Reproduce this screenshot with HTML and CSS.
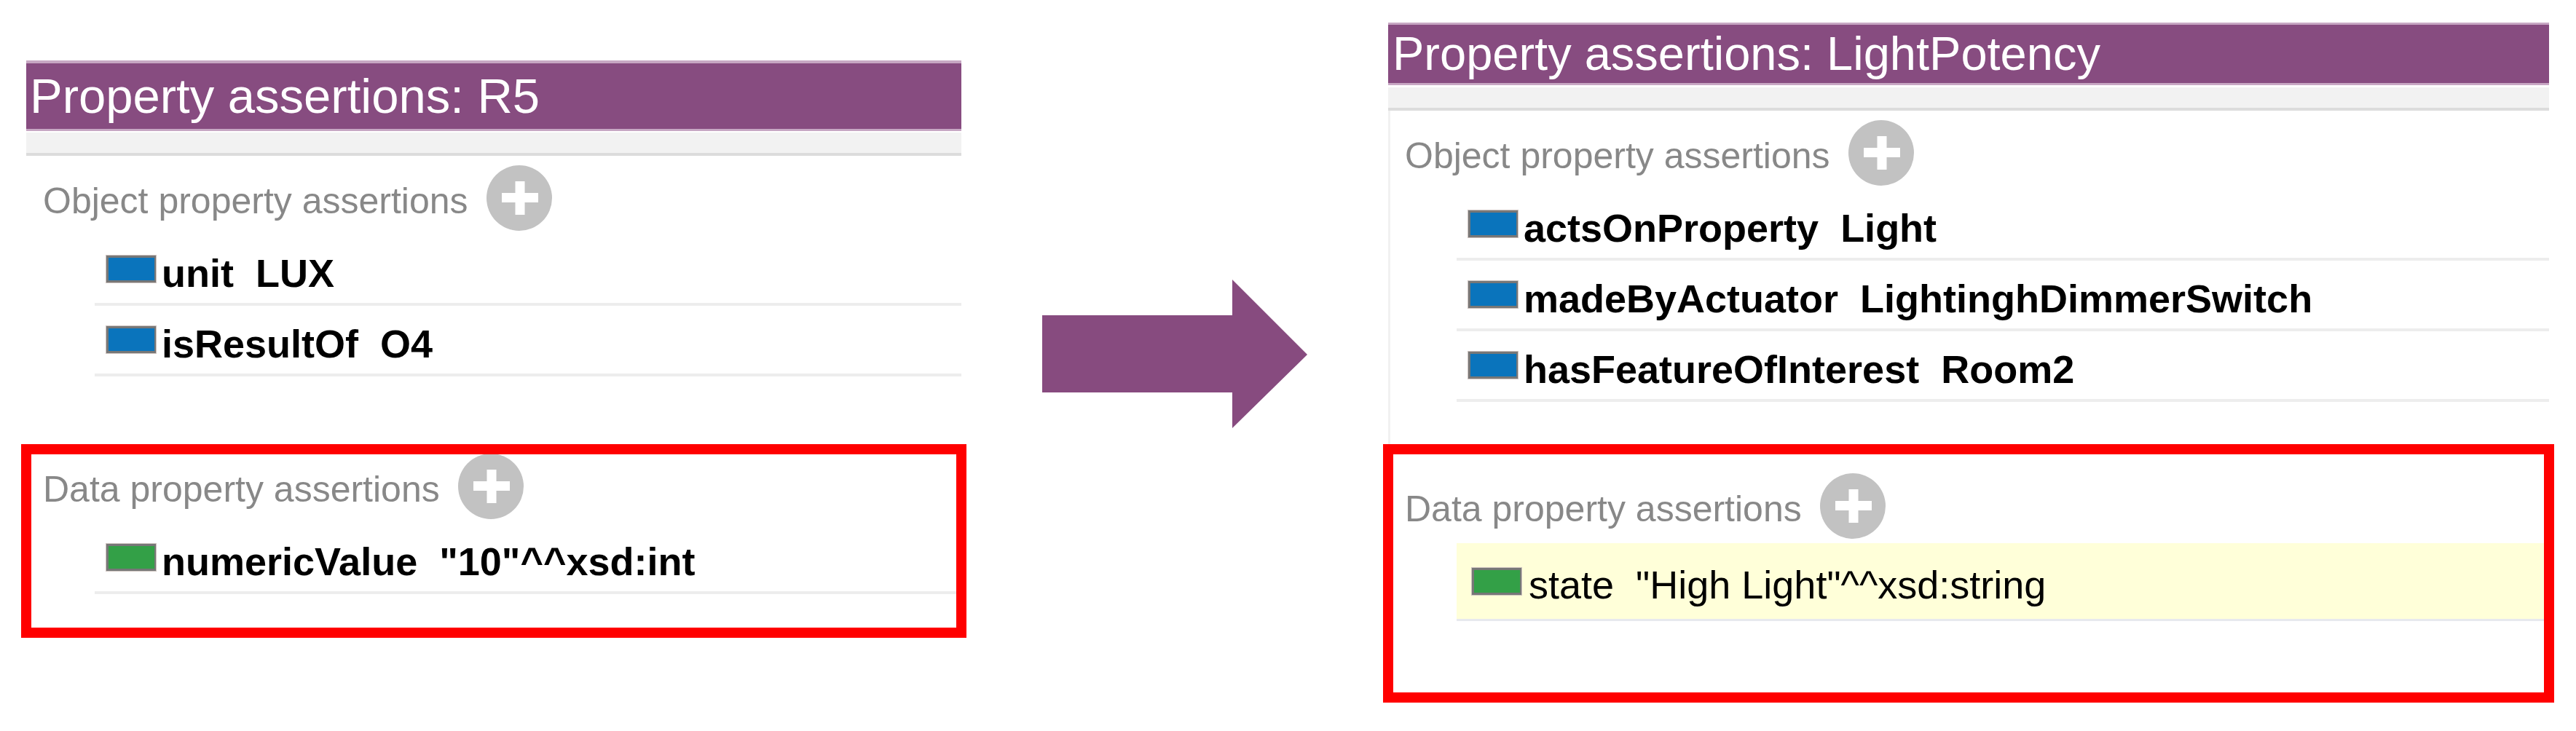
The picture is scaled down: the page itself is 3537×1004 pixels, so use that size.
FILE: index.html
```html
<!DOCTYPE html>
<html lang="en">
<head>
    <meta charset="UTF-8">
    <meta name="viewport" content="width=device-width, initial-scale=1.0">
    <title>Property assertions: R5 → LightPotency</title>
    <link rel="stylesheet" href="styles.css">
</head>
<body>
    <main class="compare">
        <section class="panel panel-r5">
            <div class="panel-title">Property assertions: R5</div>
            <div class="panel-toolbar"></div>
            <div class="panel-body">
                <div class="group group-objects">
                    <div class="group-head">
                        <span class="group-label">Object property assertions</span>
                        <svg class="add" viewBox="0 0 90 90"><circle cx="45" cy="45" r="45" fill="#c2c2c2"/><rect x="21" y="38" width="50" height="13" fill="#fff"/><rect x="39.5" y="22" width="13" height="46" fill="#fff"/></svg>
                    </div>
                    <ul class="assertions">
                        <li class="assertion"><span class="swatch swatch-object"></span><span class="assertion-text">unit  LUX</span></li>
                        <li class="assertion"><span class="swatch swatch-object"></span><span class="assertion-text">isResultOf  O4</span></li>
                    </ul>
                </div>
                <div class="group group-data highlight">
                    <div class="group-head">
                        <span class="group-label">Data property assertions</span>
                        <svg class="add" viewBox="0 0 90 90"><circle cx="45" cy="45" r="45" fill="#c2c2c2"/><rect x="21" y="38" width="50" height="13" fill="#fff"/><rect x="39.5" y="22" width="13" height="46" fill="#fff"/></svg>
                    </div>
                    <ul class="assertions">
                        <li class="assertion"><span class="swatch swatch-data"></span><span class="assertion-text">numericValue  "10"^^xsd:int</span></li>
                    </ul>
                </div>
            </div>
        </section>

        <svg class="arrow" viewBox="0 0 364 204"><polygon points="0,49 261,49 261,0 364,103 261,204 261,155 0,155" fill="#874b7f"/></svg>

        <section class="panel panel-light">
            <div class="panel-title">Property assertions: LightPotency</div>
            <div class="panel-toolbar"></div>
            <div class="panel-body">
                <div class="group group-objects">
                    <div class="group-head">
                        <span class="group-label">Object property assertions</span>
                        <svg class="add" viewBox="0 0 90 90"><circle cx="45" cy="45" r="45" fill="#c2c2c2"/><rect x="21" y="38" width="50" height="13" fill="#fff"/><rect x="39.5" y="22" width="13" height="46" fill="#fff"/></svg>
                    </div>
                    <ul class="assertions">
                        <li class="assertion"><span class="swatch swatch-object"></span><span class="assertion-text">actsOnProperty  Light</span></li>
                        <li class="assertion"><span class="swatch swatch-object"></span><span class="assertion-text">madeByActuator  LightinghDimmerSwitch</span></li>
                        <li class="assertion"><span class="swatch swatch-object"></span><span class="assertion-text">hasFeatureOfInterest  Room2</span></li>
                    </ul>
                </div>
                <div class="group group-data highlight">
                    <div class="group-head">
                        <span class="group-label">Data property assertions</span>
                        <svg class="add" viewBox="0 0 90 90"><circle cx="45" cy="45" r="45" fill="#c2c2c2"/><rect x="21" y="38" width="50" height="13" fill="#fff"/><rect x="39.5" y="22" width="13" height="46" fill="#fff"/></svg>
                    </div>
                    <ul class="assertions">
                        <li class="assertion assertion-selected"><span class="swatch swatch-data"></span><span class="assertion-text">state  "High Light"^^xsd:string</span></li>
                    </ul>
                </div>
            </div>
        </section>
    </main>
</body>
</html>
```

FILE: styles.css
```css
body {
    margin: 0;
    background-color: #fff;
    font-family: "Liberation Sans", Arial, sans-serif;
}

.compare {
    display: flex;
    align-items: flex-start;
    padding-left: 36px;
}

.panel {
    display: flex;
    flex-direction: column;
}

.panel-r5 {
    width: 1284px;
    margin-top: 83px;
}

.panel-light {
    width: 1594px;
    margin-top: 31px;
    margin-left: 111px;
}

.arrow {
    width: 364px;
    height: 204px;
    margin-top: 384px;
    margin-left: 111px;
    flex-shrink: 0;
}

/* purple title bar */
.panel-title {
    background-color: #874c80;
    border-top: 4px solid #c7a7c3;
    border-bottom: 3px solid #c7a7c3;
    color: #fff;
    font-size: 67px;
    height: 90px;
    line-height: 90px;
    padding-left: 5px;
    white-space: nowrap;
}

.panel-light .panel-title {
    border-top-width: 3px;
    font-size: 65px;
    height: 80px;
    line-height: 80px;
    padding-left: 6px;
}

.panel-toolbar {
    margin-top: 2px;
    height: 28px;
    background-color: #f2f2f2;
    border-bottom: 4px solid #dcdcdc;
}

.panel-light .panel-toolbar {
    margin-top: 3px;
}

.panel-light .panel-body {
    box-shadow: inset 3px 0 #f1f1f1;
}

/* sections */
.group-head {
    display: flex;
    align-items: center;
    box-sizing: border-box;
    height: 109px;
    padding: 6px 0 0 23px;
}

.group-label {
    font-size: 50px;
    color: #888;
    margin-top: 9px;
    white-space: nowrap;
}

.add {
    width: 90px;
    height: 90px;
    margin-left: 25px;
    flex-shrink: 0;
}

.panel-r5 .group-objects {
    margin-bottom: 93px;
}

.panel-light .group-objects {
    margin-bottom: 58px;
}

.panel-r5 .group-data {
    padding-bottom: 60px;
}

.panel-light .group-data {
    padding-top: 27px;
    padding-bottom: 112px;
}

/* red annotation frame drawn over the data section */
.highlight {
    position: relative;
}

.highlight::after {
    content: "";
    position: absolute;
    top: 0;
    bottom: 0;
    left: -7px;
    right: -7px;
    border: 14px solid #f00;
    pointer-events: none;
}

.assertions {
    list-style: none;
    margin: 0;
    padding: 0;
}

.assertion {
    display: flex;
    align-items: center;
    height: 93px;
    margin-left: 94px;
    padding-left: 16px;
    border-bottom: 4px solid #ededed;
}

.assertion-selected {
    height: 104px;
    padding-left: 21px;
    background-color: #ffffd9;
    border-bottom: 3px solid #e7e9ee;
}

.swatch {
    width: 68px;
    height: 37px;
    box-sizing: border-box;
    border: 3px solid #777;
    border-right-width: 2px;
    box-shadow: 0 0 0 1px #cdc2be;
    flex-shrink: 0;
}

.swatch-object {
    background-color: #0a74bc;
}

.swatch-data {
    background-color: #33a047;
}

.assertion-text {
    font-size: 54px;
    font-weight: bold;
    color: #000;
    margin-left: 8px;
    margin-top: 10px;
    white-space: pre;
}

.assertion-selected .assertion-text {
    font-weight: normal;
    margin-left: 10px;
}
```
